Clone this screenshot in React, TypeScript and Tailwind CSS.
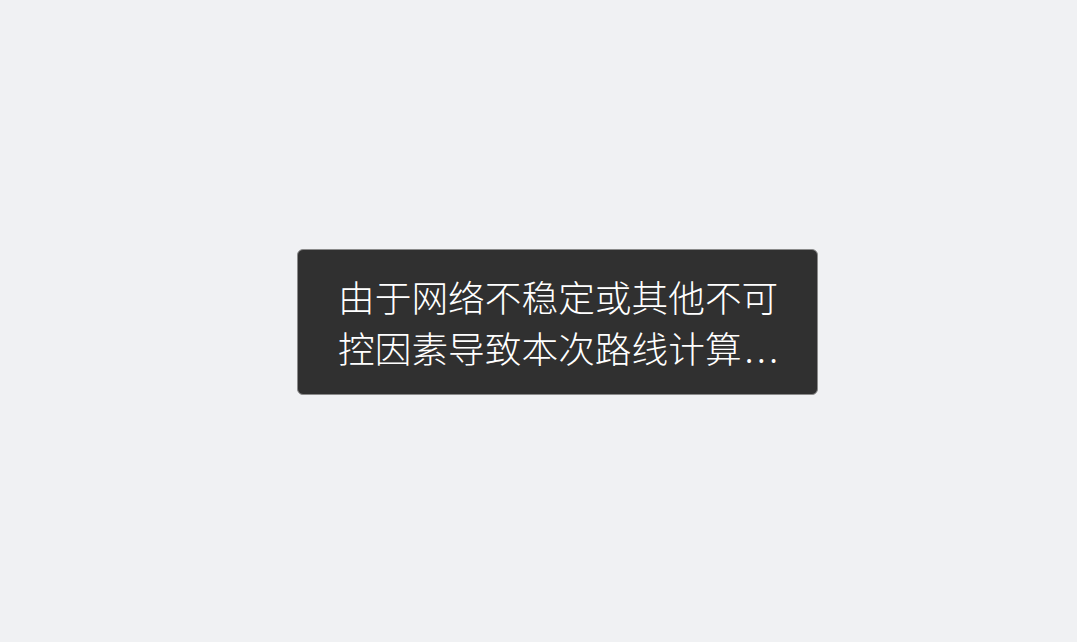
export default function App() {
  return (
    <div className="w-[1077px] h-[642px] bg-[#f0f1f3] pl-[297px] pt-[249px]">
      <div
        className="w-[521px] rounded-[6px] border border-[#8a8a8a] bg-[#303030] pl-[40px] pr-[38px] pt-[21px] pb-[21px] text-white text-[36.7px] leading-[51px] font-light"
        style={{ fontFamily: '"Noto Sans CJK SC", "Noto Sans", sans-serif' }}
      >
        <p className="whitespace-nowrap">由于网络不稳定或其他不可</p>
        <p className="whitespace-nowrap">
          控因素导致本次路线计算<span className="ml-[3px] tracking-[3px]">...</span>
        </p>
      </div>
    </div>
  );
}
